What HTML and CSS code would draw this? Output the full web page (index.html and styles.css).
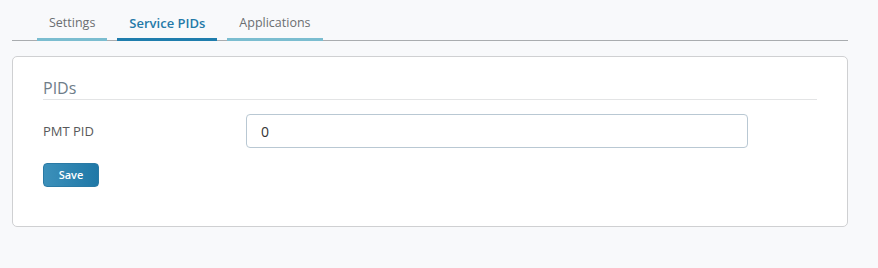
FILE: index.html
```html
<!DOCTYPE html>
<html lang="en">
<head>
    <meta charset="UTF-8">
    <meta name="viewport" content="width=device-width, initial-scale=1.0">
    <title>Service PIDs</title>
    <link rel="stylesheet" href="styles.css">
</head>
<body>
<div class="page">
    <ul class="tabs">
        <li class="tab">Settings</li>
        <li class="tab active">Service PIDs</li>
        <li class="tab">Applications</li>
    </ul>

    <div class="panel">
        <h2>PIDs</h2>
        <form id="pidForm">
            <div class="form-row">
                <label for="pmtPid">PMT PID</label>
                <input type="text" id="pmtPid" name="pmtPid" value="0">
            </div>
            <button type="submit">Save</button>
        </form>
    </div>
</div>
</body>
</html>
```

FILE: styles.css
```css
body {
    font-family: "Open Sans", Arial, sans-serif;
    margin: 0;
    background-color: #f8f9fb;
}

.page {
    width: 836px;
    margin-left: 12px;
}

.tabs {
    display: flex;
    gap: 10px;
    list-style: none;
    margin: 0;
    padding: 0 0 0 25px;
    border-bottom: 1px solid #a9acaf;
}

.tab {
    padding: 14px 12px 6px;
    margin-bottom: -1px;
    font-size: 12.5px;
    line-height: 18px;
    color: #6b6e71;
    border-bottom: 3px solid #7bbdd0;
    cursor: pointer;
}

.tab.active {
    font-size: 13px;
    color: #2479a8;
    font-weight: 600;
    border-bottom-color: #1f7dad;
}

.panel {
    margin-top: 15px;
    background-color: #fff;
    border: 1px solid #cfd0d2;
    border-radius: 5px;
    padding: 20px 30px 39px;
}

h2 {
    margin: 0;
    font-size: 16px;
    font-weight: 400;
    line-height: 22px;
    color: #6f7d89;
    border-bottom: 1px solid #e3e4e5;
}

.form-row {
    display: flex;
    align-items: center;
    margin-top: 14px;
    margin-bottom: 14px;
}

label {
    width: 203px;
    font-size: 13px;
    color: #58595b;
}

input {
    width: 502px;
    height: 34px;
    box-sizing: border-box;
    padding: 0 14px;
    font-family: inherit;
    font-size: 14px;
    color: #333;
    border: 1px solid #b9c8d3;
    border-radius: 4px;
}

button {
    width: 56px;
    height: 24px;
    padding: 0;
    font-family: inherit;
    font-size: 11px;
    font-weight: 600;
    color: #fff;
    background: linear-gradient(to right, #3c90ba, #1f78a7);
    border: 1px solid #2a7aa5;
    border-radius: 4px;
    cursor: pointer;
}
```
